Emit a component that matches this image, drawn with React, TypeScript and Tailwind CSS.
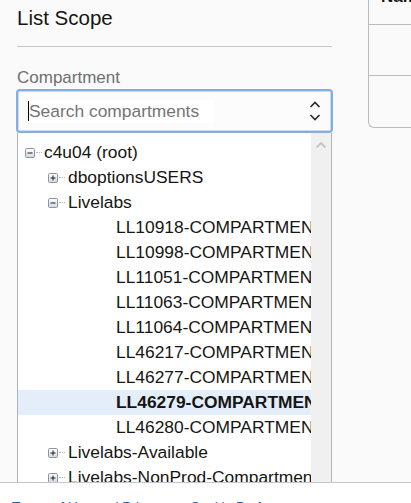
import { ReactNode } from 'react'

type Node = {
  label: string
  level: number
  kind: 'open' | 'closed' | 'leaf'
  selected?: boolean
}

const TREE: Node[] = [
  { label: 'c4u04 (root)', level: 0, kind: 'open' },
  { label: 'dboptionsUSERS', level: 1, kind: 'closed' },
  { label: 'Livelabs', level: 1, kind: 'open' },
  { label: 'LL10918-COMPARTMENT', level: 2, kind: 'leaf' },
  { label: 'LL10998-COMPARTMENT', level: 2, kind: 'leaf' },
  { label: 'LL11051-COMPARTMENT', level: 2, kind: 'leaf' },
  { label: 'LL11063-COMPARTMENT', level: 2, kind: 'leaf' },
  { label: 'LL11064-COMPARTMENT', level: 2, kind: 'leaf' },
  { label: 'LL46217-COMPARTMENT', level: 2, kind: 'leaf' },
  { label: 'LL46277-COMPARTMENT', level: 2, kind: 'leaf' },
  { label: 'LL46279-COMPARTMENT', level: 2, kind: 'leaf', selected: true },
  { label: 'LL46280-COMPARTMENT', level: 2, kind: 'leaf' },
  { label: 'Livelabs-Available', level: 1, kind: 'closed' },
  { label: 'Livelabs-NonProd-Compartment', level: 1, kind: 'closed' },
]

function Expander({ open }: { open: boolean }) {
  return (
    <span className="flex items-center">
      <svg width="10" height="10" viewBox="0 0 10 10" className="block">
        <defs>
          <linearGradient id="exp" x1="0" y1="0" x2="0" y2="1">
            <stop offset="0" stopColor="#ffffff" />
            <stop offset="1" stopColor="#d2d8e0" />
          </linearGradient>
        </defs>
        <rect x="0.5" y="0.5" width="9" height="9" rx="1.2" fill="url(#exp)" stroke="#8a94a2" />
        <rect x="2.5" y="4.5" width="5" height="1" fill="#1e1e1e" />
        {!open && <rect x="4.5" y="2.5" width="1" height="5" fill="#1e1e1e" />}
      </svg>
      <span className="ml-[1px] w-[6px] border-t border-dotted border-[#b5b5b5]" />
    </span>
  )
}

function Row({ node }: { node: Node }) {
  let content: ReactNode
  if (node.kind === 'leaf') {
    content = <span className="ml-[98px]">{node.label}</span>
  } else if (node.level === 0) {
    content = (
      <span className="ml-[7px] flex items-center">
        <Expander open={node.kind === 'open'} />
        <span className="ml-[2px]">{node.label}</span>
      </span>
    )
  } else {
    content = (
      <span className="ml-[30px] flex items-center">
        <Expander open={node.kind === 'open'} />
        <span className="ml-[3px]">{node.label}</span>
      </span>
    )
  }
  return (
    <div
      className={
        'flex h-[25px] items-center whitespace-nowrap ' +
        (node.selected ? 'bg-[#e4eefb] font-bold' : '')
      }
    >
      {content}
    </div>
  )
}

export default function App() {
  return (
    <div
      className="h-[503px] w-[411px] overflow-hidden bg-[#fafafa] text-[#161513]"
      style={{ fontFamily: '"Liberation Sans", Arial, sans-serif' }}
    >
      <div className="flex h-[482px] overflow-hidden">
        {/* Scope panel */}
        <div className="ml-[16px] w-[317px] shrink-0 pt-[6px]">
          <h2 className="ml-[1px] text-[20.5px] leading-[24px]">List Scope</h2>
          <div className="ml-[1px] mt-[16px] w-[315px] border-t border-[#c6c6c6]" />
          <div className="ml-[1px] mt-[21px] text-[17px] leading-[20px] text-[#6f6f6f]">Compartment</div>

          <div className="mt-[1px] flex h-[44px] items-center rounded-[4px] border-2 border-[#86ade3] bg-[#fcfcfc] shadow-[inset_0_0_0_1px_#c9dbf3]">
            <div className="ml-[10px] flex h-[23px] w-[186px] items-center bg-white">
              <span className="h-[20px] w-px bg-black" />
              <span className="text-[17.4px] text-[#757575]">Search compartments</span>
            </div>
            <svg width="12" height="22" viewBox="0 0 12 22" className="ml-auto mr-[10px]">
              <path d="M1.5 7 L6 2.5 L10.5 7" fill="none" stroke="#2a2a2a" strokeWidth="1.6" />
              <path d="M1.5 15 L6 19.5 L10.5 15" fill="none" stroke="#2a2a2a" strokeWidth="1.6" />
            </svg>
          </div>

          {/* dropdown */}
          <div className="ml-[1px] flex h-[400px] w-[315px] border border-t-0 border-[#aeb3ba] bg-white">
            <div className="flex-1 overflow-hidden pt-[7px] text-[17.4px]">
              {TREE.map((n) => (
                <Row key={n.label} node={n} />
              ))}
            </div>
            <div className="flex w-[20px] shrink-0 justify-center bg-[#f0f0f0] pt-[8px]">
              <svg width="12" height="8" viewBox="0 0 12 8">
                <path d="M1.5 6.5 L6 2 L10.5 6.5" fill="none" stroke="#c4c4c4" strokeWidth="1.8" />
              </svg>
            </div>
          </div>
        </div>

        {/* table stub */}
        <div className="ml-[35px] mt-[-20px] flex-1">
          <div className="rounded-bl-[6px] border-b border-l border-[#b9bdc3]">
            <div className="h-[45px] border-b border-[#b9bdc3] pl-[12px] pt-[8px] text-[17px] font-bold leading-[18px]">
              Name
            </div>
            <div className="h-[51px] border-b border-[#b9bdc3]" />
            <div className="h-[51px]" />
          </div>
        </div>
      </div>

      <footer className="flex h-[21px] gap-[23px] border-t border-[#c3c6cb] bg-white pl-[12px] pt-[16px] text-[13.6px] leading-[16px] text-[#1f5fad]">
        <a>Terms of Use and Privacy</a>
        <a>Cookie Preferences</a>
      </footer>
    </div>
  )
}
